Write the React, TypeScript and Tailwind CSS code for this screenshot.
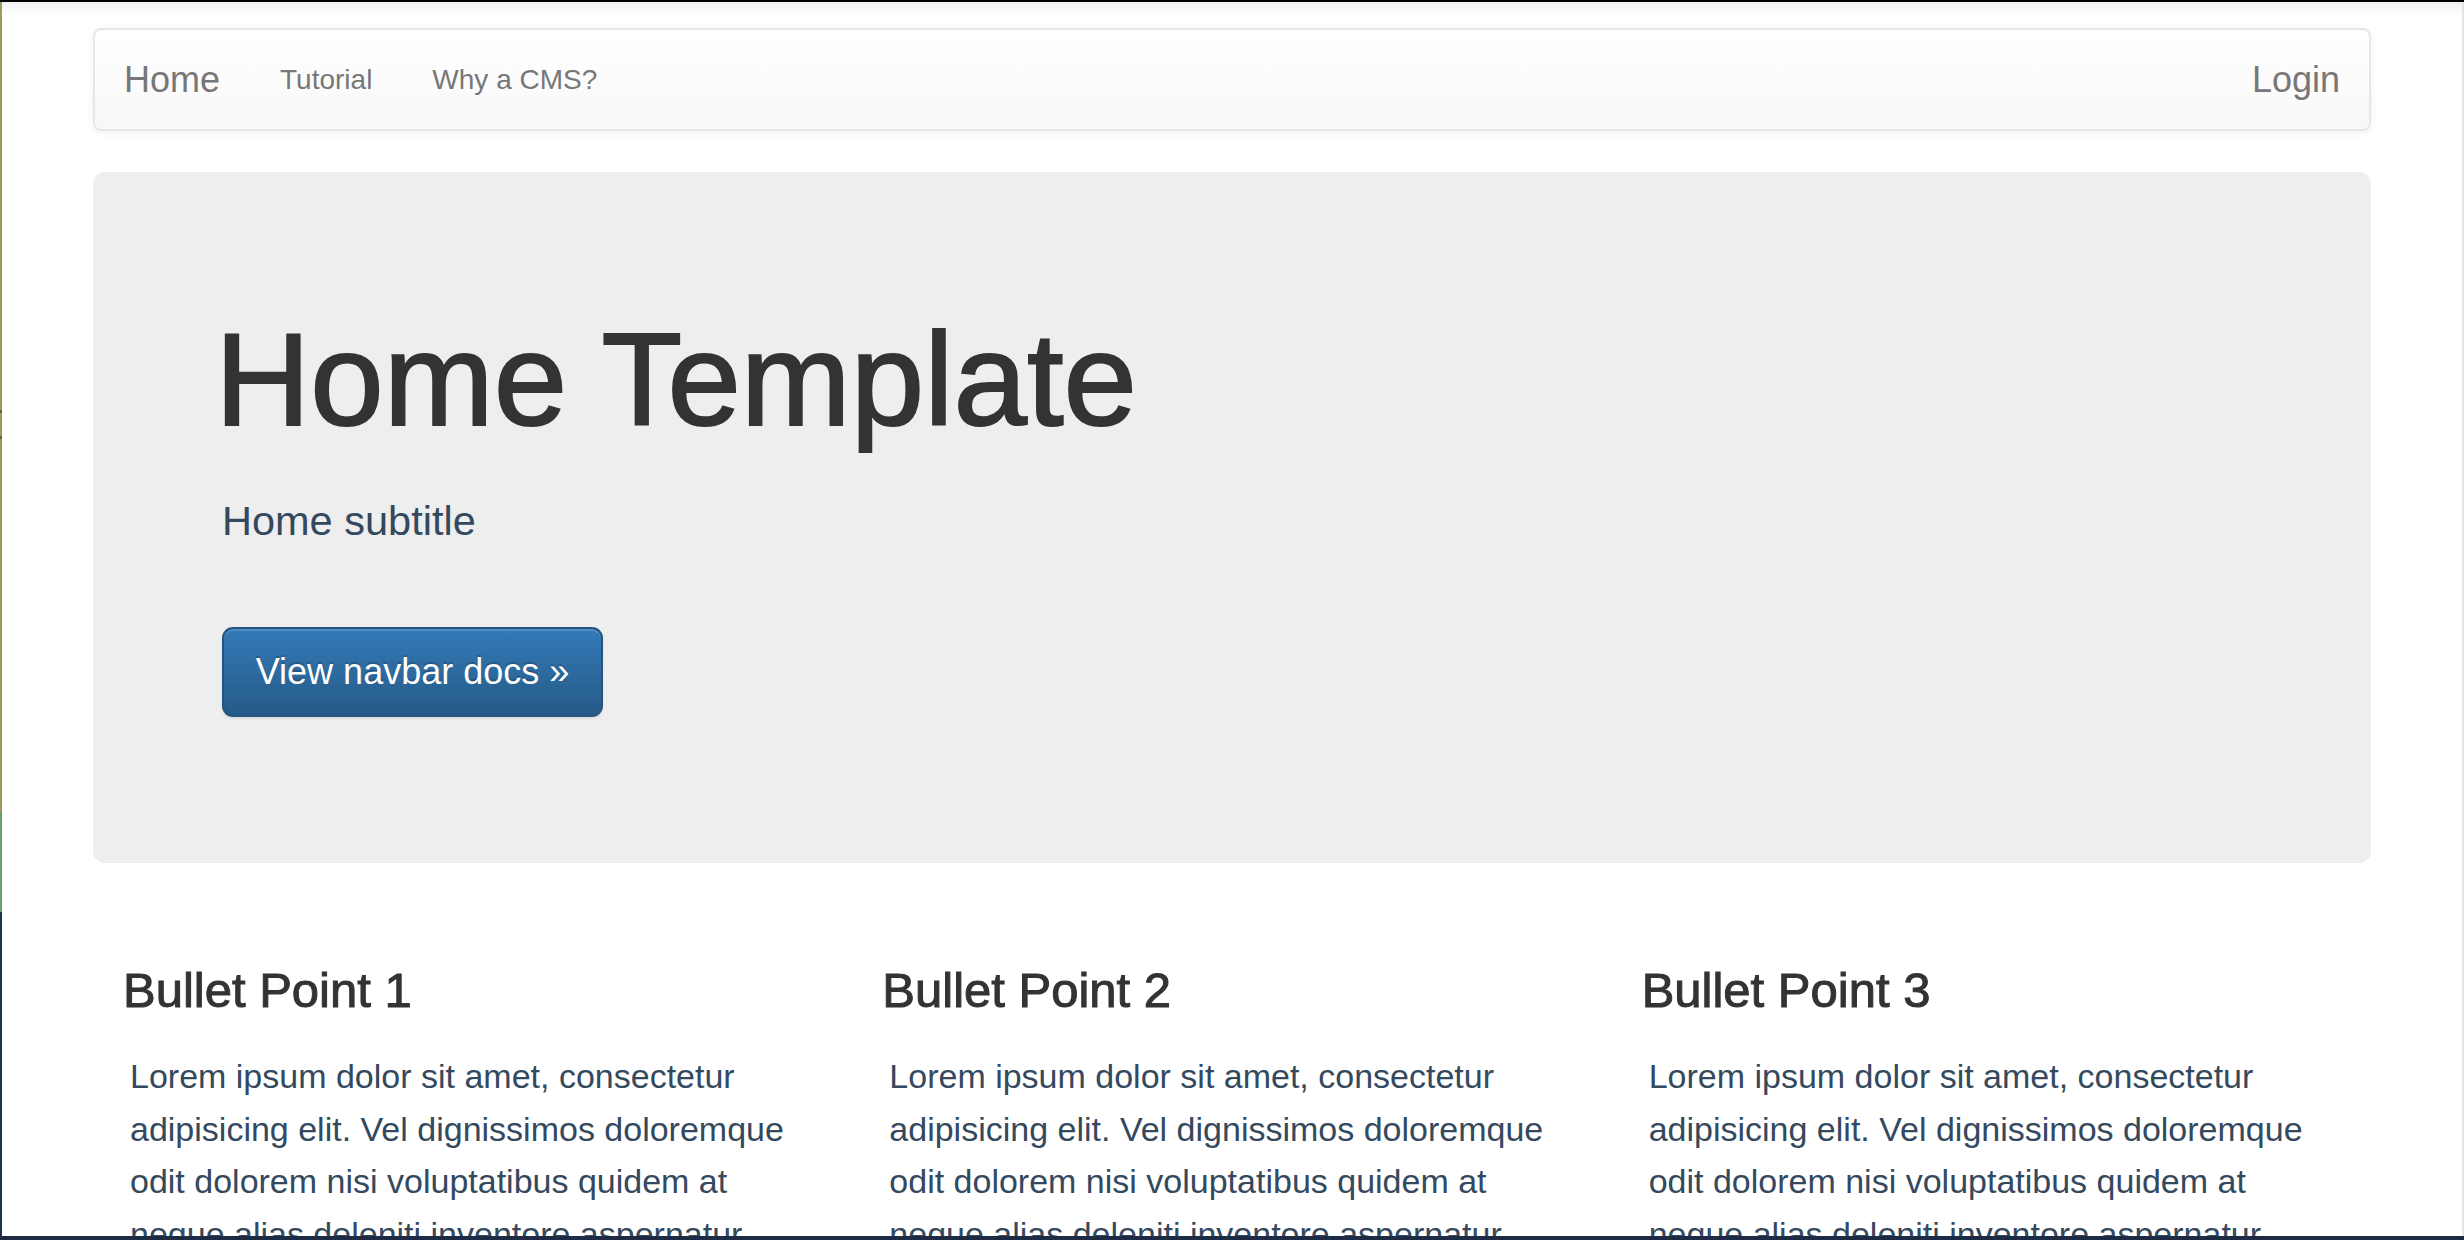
import React from "react";

const navLinks = ["Tutorial", "Why a CMS?"];

const lorem =
  "Lorem ipsum dolor sit amet, consectetur adipisicing elit. Vel dignissimos doloremque odit dolorem nisi voluptatibus quidem at neque alias deleniti inventore aspernatur beatae ipsa a tempore nihil officiis dolorum eveniet.";

const bullets = [
  { title: "Bullet Point 1", body: lorem },
  { title: "Bullet Point 2", body: lorem },
  { title: "Bullet Point 3", body: lorem },
];

const App = () => {
  return (
    <div
      className="h-[1240px] overflow-hidden flex flex-col bg-white border-t-2 border-t-black border-b-4 border-b-[#1e2b45]"
      style={{ fontFamily: '"Liberation Sans", Arial, sans-serif' }}
    >
      <div className="flex flex-1 min-h-0">
        {/* window edge */}
        <div className="w-[2px] shrink-0 bg-[linear-gradient(to_bottom,#9e9760_0,#9e9760_408px,#6b6630_408px,#6b6630_411px,#9e9760_411px,#9e9760_434px,#6b6630_434px,#6b6630_437px,#9e9760_437px,#9e9760_810px,#6a9f6a_810px,#6a9f6a_910px,#1f3050_910px)]" />

        <div className="flex-1 min-w-0 overflow-hidden border-r-2 border-r-[#e4e4e4] bg-[linear-gradient(to_bottom,#f1f1f1,#ffffff_14px)] pt-[26px]">
          <div className="w-[2278px] mx-auto">
            {/* navbar */}
            <nav className="h-[103px] flex items-center justify-between rounded-[8px] border-2 border-[#e7e7e7] bg-[linear-gradient(to_bottom,#ffffff,#f8f8f8)] shadow-[0_2px_8px_rgba(0,0,0,0.06)] px-[29px]">
              <div className="flex items-center">
                <a className="text-[36px] leading-[36px] text-[#777]">Home</a>
                <ul className="flex items-center ml-[30px]">
                  {navLinks.map((link) => (
                    <li key={link}>
                      <a className="block px-[30px] text-[28px] leading-[40px] text-[#777]">
                        {link}
                      </a>
                    </li>
                  ))}
                </ul>
              </div>
              <a className="text-[36px] leading-[36px] text-[#777]">Login</a>
            </nav>

            {/* jumbotron */}
            <div className="mt-[41px] rounded-[12px] bg-[#eeeeee] pt-[137px] pb-[146px] pl-[114px]">
              <h1 className="ml-[8px] text-[132px] leading-[141px] text-[#333] [-webkit-text-stroke:2px_#333]">
                Home Template
              </h1>
              <p className="mt-[41px] ml-[15px] text-[41.5px] leading-[60px] font-light text-[#34495e]">
                Home subtitle
              </p>
              <a className="mt-[76px] ml-[15px] w-[381px] h-[90px] flex items-center justify-center rounded-[11px] border-2 border-[#245580] bg-[linear-gradient(to_bottom,#337ab7,#265a88)] shadow-[inset_0_2px_0_rgba(255,255,255,0.15),0_2px_2px_rgba(0,0,0,0.075)] text-[36px] text-white [text-shadow:0_-2px_0_rgba(0,0,0,0.2)]">
                View navbar docs »
              </a>
            </div>

            {/* bullet points */}
            <div className="grid grid-cols-3 mt-[101px]">
              {bullets.map((b) => (
                <div key={b.title} className="px-[30px]">
                  <h3 className="text-[49px] leading-[53px] text-[#333] [-webkit-text-stroke:1px_#333]">
                    {b.title}
                  </h3>
                  <p className="mt-[33px] pl-[7px] text-[34px] leading-[52.5px] text-[#34495e]">
                    {b.body}
                  </p>
                </div>
              ))}
            </div>
          </div>
        </div>
      </div>
    </div>
  );
};

export default App;
